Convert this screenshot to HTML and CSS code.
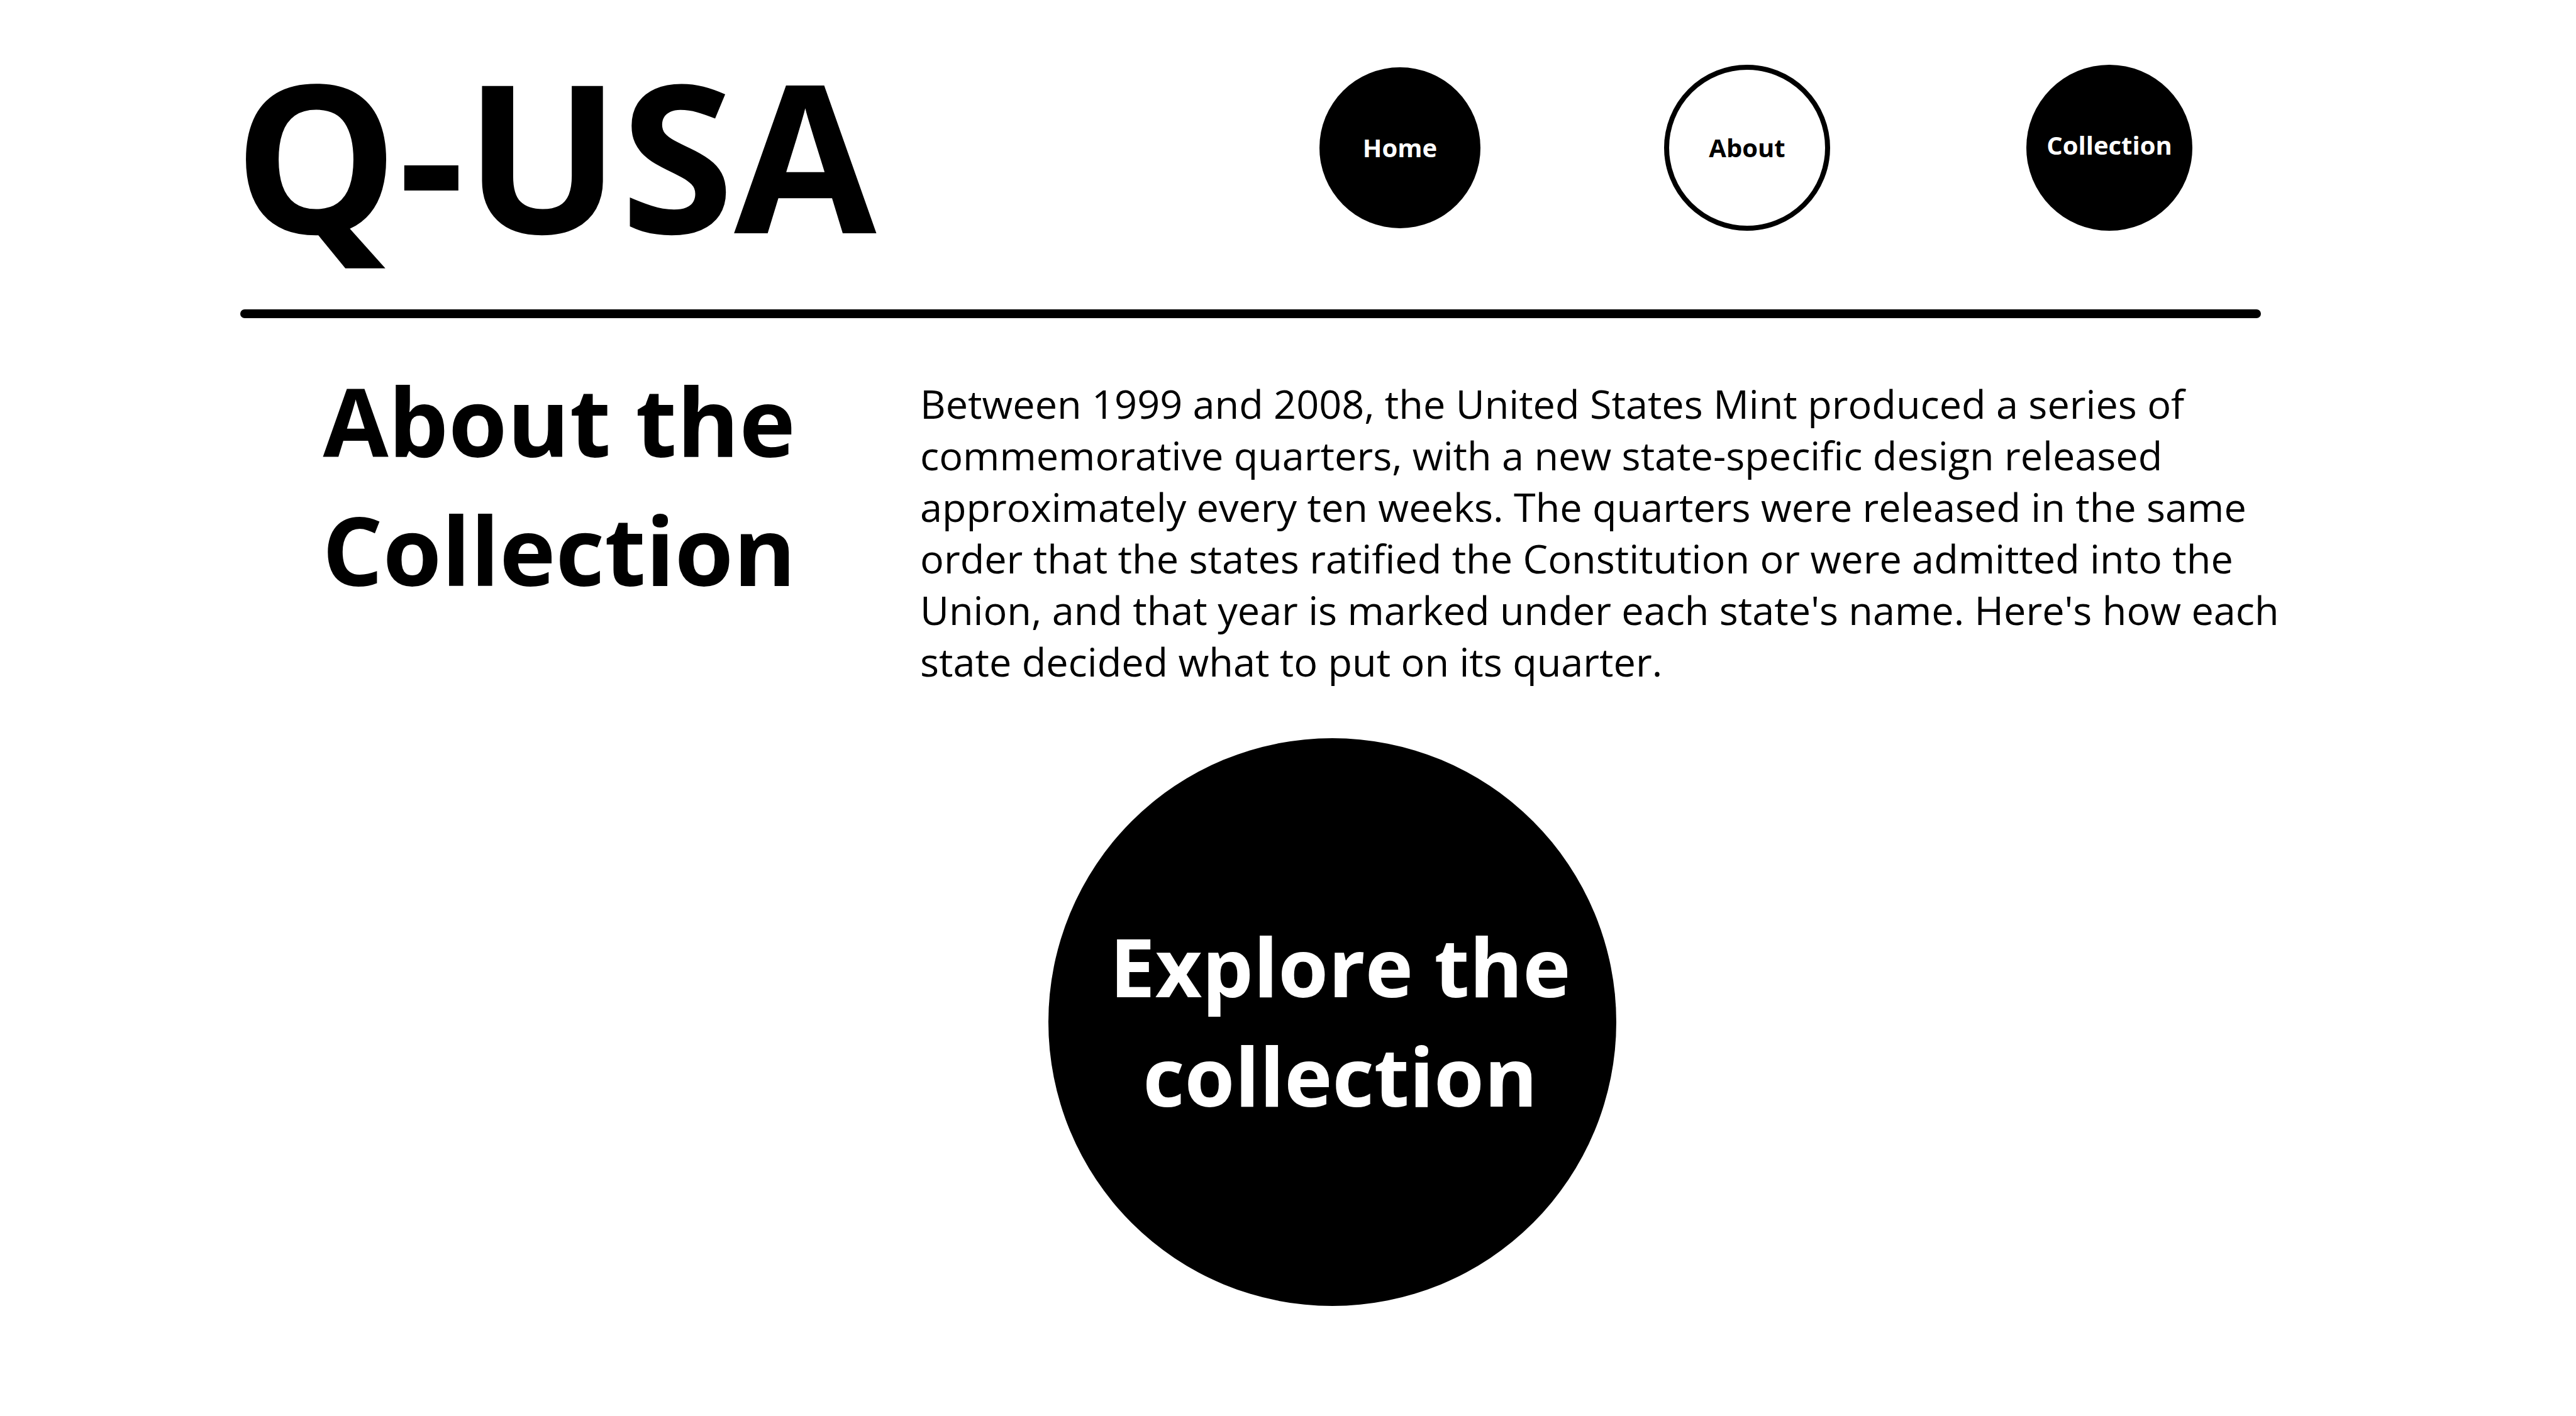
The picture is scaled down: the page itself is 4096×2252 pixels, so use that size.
FILE: index.html
```html
<!DOCTYPE html>
<html lang="en">
<head>
  <meta charset="utf-8">
  <meta name="viewport" content="width=device-width, initial-scale=1">
  <title>Q-USA</title>
  <link rel="stylesheet" href="styles.css">
</head>
<body>
  <div class="page">
    <header class="header">
      <h1 class="logo">Q-USA</h1>
      <nav class="nav">
        <a class="nav-link nav-home" href="#home">Home</a>
        <a class="nav-link nav-current" href="#about" aria-current="page">About</a>
        <a class="nav-link nav-collection" href="#collection">Collection</a>
      </nav>
    </header>
    <hr class="rule">
    <main>
      <section class="about">
        <h2 class="title">About the Collection</h2>
        <p class="text">Between 1999 and 2008, the United States Mint produced a series of commemorative quarters, with a new state-specific design released approximately every ten weeks. The quarters were released in the same order that the states ratified the Constitution or were admitted into the Union, and that year is marked under each state's name. Here's how each state decided what to put on its quarter.</p>
      </section>
      <div class="explore">
        <a class="explore-link" href="#collection">Explore the collection</a>
      </div>
    </main>
  </div>
</body>
</html>
```
FILE: styles.css
```css
* {
  box-sizing: border-box;
}

body {
  margin: 0;
  background: #fff;
  color: #000;
  font-family: "Open Sans", "Noto Sans", sans-serif;
}

.page {
  padding: 103px 446px 0 372px;
}

.header {
  display: flex;
  align-items: flex-start;
  justify-content: space-between;
  padding: 0 164px 116px 0;
}

.logo {
  margin: 0;
  padding-top: 9px;
  font-size: 328px;
  font-weight: 700;
  line-height: 264px;
}

.nav {
  display: flex;
  align-items: center;
  gap: 292px;
}

.nav-link {
  display: flex;
  align-items: center;
  justify-content: center;
  width: 264px;
  height: 264px;
  border-radius: 50%;
  background: #000;
  color: #fff;
  font-size: 40px;
  font-weight: 700;
  line-height: 56px;
  text-decoration: none;
}

.nav-home {
  width: 256px;
  height: 256px;
}

.nav-current {
  border: 8px solid #000;
  background: #fff;
  color: #000;
}

.nav-collection {
  margin-left: 20px;
  padding-bottom: 8px;
}

.rule {
  height: 14px;
  margin: 0 55px 0 10px;
  border: 0;
  border-radius: 7px;
  background: #000;
}

.about {
  display: grid;
  grid-template-columns: 772px 1fr;
  gap: 188px;
  padding: 58px 0 0 131px;
}

.title {
  margin: 0;
  padding-top: 2px;
  font-size: 151px;
  font-weight: 700;
  line-height: 205px;
  text-align: center;
}

.text {
  margin: 0;
  padding-top: 37px;
  font-size: 63px;
  line-height: 82px;
}

.explore {
  display: flex;
  justify-content: center;
  padding: 81px 0 81px 214px;
}

.explore-link {
  display: flex;
  align-items: center;
  justify-content: center;
  width: 903px;
  height: 903px;
  padding: 0 70px 6px 96px;
  border-radius: 50%;
  background: #000;
  color: #fff;
  font-size: 129px;
  font-weight: 700;
  line-height: 174px;
  text-align: center;
  text-decoration: none;
}
```
